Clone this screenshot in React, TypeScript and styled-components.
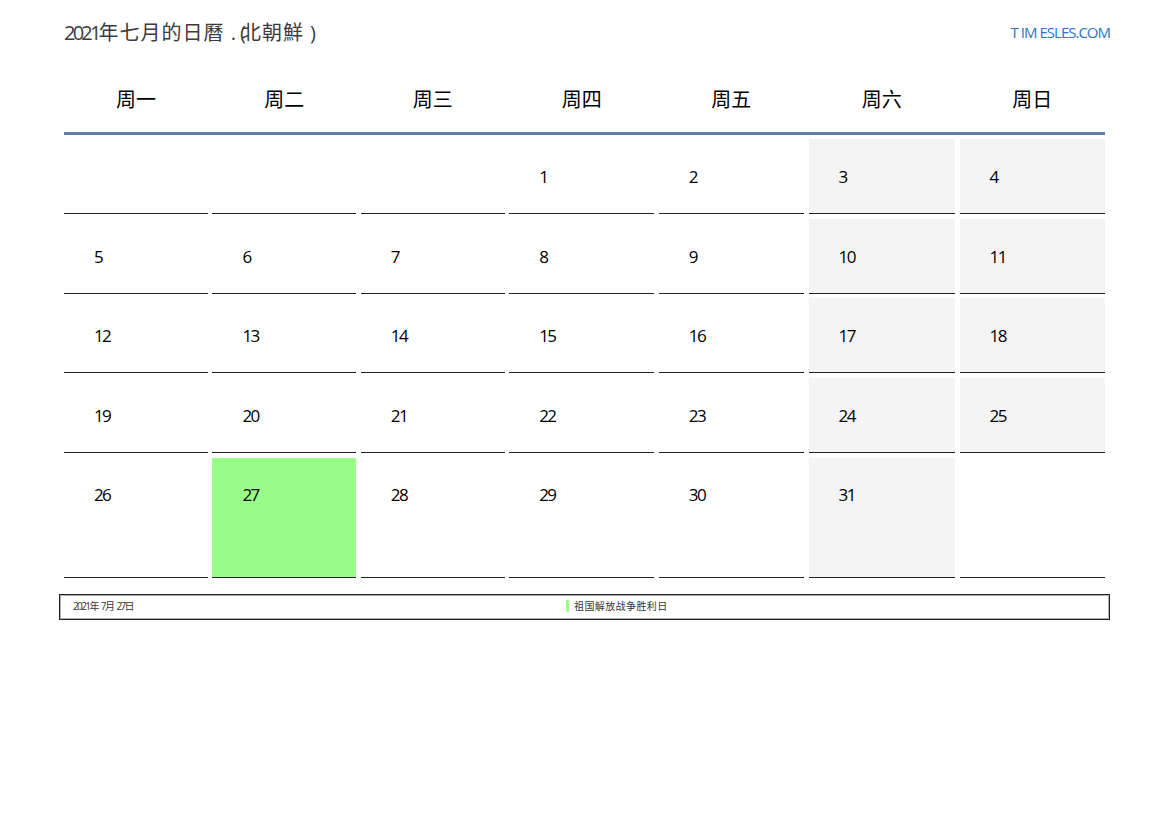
import React from 'react'
import styled, { createGlobalStyle } from 'styled-components'

const WEEKDAYS = ['周一', '周二', '周三', '周四', '周五', '周六', '周日']
const TODAY = 27
const FIRST_OFFSET = 3
const DAYS_IN_MONTH = 31
const CELL_COUNT = 35

const cells = Array.from({ length: CELL_COUNT }, (_, i) => {
  const day = i - FIRST_OFFSET + 1
  return day >= 1 && day <= DAYS_IN_MONTH ? day : null
})

export default function App() {
  return (
    <Page>
      <GlobalStyle />
      <Header>
        <Title>
          <Digits>2021</Digits>年七月的日曆 .<Paren>(</Paren>北朝鮮 )
        </Title>
        <SiteLink>
          <LinkPart>T</LinkPart>
          <LinkPart>IM</LinkPart>ESLES.COM
        </SiteLink>
      </Header>
      <Weekdays>
        {WEEKDAYS.map((name) => (
          <Weekday key={name}>{name}</Weekday>
        ))}
      </Weekdays>
      <Days>
        {cells.map((day, i) => (
          <Day key={i} $weekend={i % 7 >= 5 && day !== null} $today={day === TODAY}>
            {day}
          </Day>
        ))}
      </Days>
      <Legend>
        <LegendDate>2021年 7月 27日</LegendDate>
        <LegendName>祖国解放战争胜利日</LegendName>
      </Legend>
    </Page>
  )
}

const GlobalStyle = createGlobalStyle`
  html, body {
    margin: 0;
    background: #fff;
    font-family: 'Open Sans', 'Noto Sans CJK SC', sans-serif;
  }
`

const COLUMNS = '143.8px 143.8px 143.8px 145px 145.2px 146.4px 145.4px'

const Page = styled.div`
  width: 1169px;
  height: 827px;
  padding: 19px 59px 0;
  box-sizing: border-box;
  overflow: hidden;
`

const Header = styled.div`
  display: flex;
  justify-content: space-between;
  align-items: center;
  height: 27px;
  padding-left: 5px;
`

const Title = styled.div`
  font-size: 20px;
  line-height: 27px;
  color: #3c3c3c;
  letter-spacing: 1px;
  white-space: nowrap;
`

const Digits = styled.span`
  letter-spacing: -2.8px;
`

const Paren = styled.span`
  letter-spacing: -5px;
  margin-left: 3px;
`

const SiteLink = styled.div`
  font-size: 15px;
  line-height: 27px;
  color: #2f75bb;
  letter-spacing: -1px;
`

const LinkPart = styled.span`
  margin-right: 3px;
`

const Weekdays = styled.div`
  display: grid;
  grid-template-columns: ${COLUMNS};
  column-gap: 4.6px;
  margin: 21px 0 0 5px;
  width: 1041px;
  height: 65px;
  border-bottom: 3px solid #5f7ea6;
`

const Weekday = styled.div`
  font-size: 20px;
  line-height: 65px;
  text-align: center;
  color: #000;
`

const Days = styled.div`
  display: grid;
  grid-template-columns: ${COLUMNS};
  grid-template-rows: 75px 75px 75px 75px 120px;
  gap: 4.7px 4.6px;
  margin: 4px 0 0 5px;
  width: 1041px;
`

const Day = styled.div<{ $weekend: boolean; $today: boolean }>`
  box-sizing: border-box;
  padding: 27px 0 0 30px;
  font-size: 17px;
  line-height: 22px;
  letter-spacing: -1.6px;
  color: #000;
  border-bottom: 1px solid #222;
  background: ${(p) => (p.$today ? '#9bfd89' : p.$weekend ? '#f4f4f4' : 'transparent')};

  &:nth-child(n + 29) {
    padding-top: 26px;
  }
`

const Legend = styled.div`
  display: flex;
  align-items: center;
  box-sizing: border-box;
  width: 1051px;
  height: 26px;
  margin-top: 16px;
  border: 1px solid #222;
  box-shadow: inset 0 0 0 1px #b0b0b0;
  padding: 0 0 2px 13px;
`

const LegendDate = styled.div`
  width: 493px;
  font-size: 10px;
  letter-spacing: -1.6px;
  word-spacing: 2px;
  white-space: nowrap;
  color: #333;
`

const LegendName = styled.div`
  border-left: 3px solid #9bfd89;
  padding-left: 5px;
  font-size: 10px;
  line-height: 12px;
  letter-spacing: 0.4px;
  color: #333;
`
